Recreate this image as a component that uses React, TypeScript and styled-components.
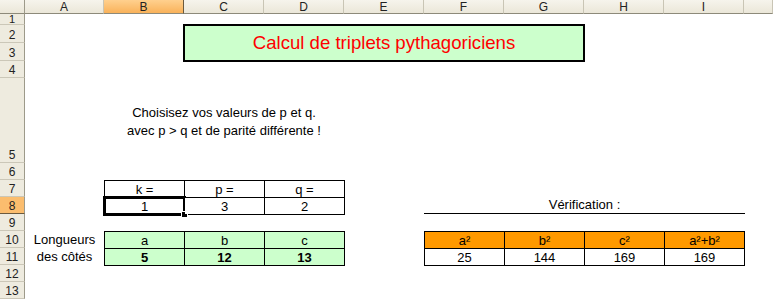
import styled, { createGlobalStyle } from "styled-components";

const GlobalStyle = createGlobalStyle`
  html, body {
    margin: 0;
    padding: 0;
    background: #ffffff;
  }
  body {
    font-family: "Liberation Sans", Arial, sans-serif;
    font-size: 13px;
    color: #000000;
  }
`;

const Sheet = styled.div`
  display: grid;
  grid-template-columns: 25px 79px repeat(8, 80px) 1fr;
  grid-template-rows: 14px 11px 18px 18px 17px 85px repeat(8, 17px);
  width: 773px;
  height: 299px;
  overflow: hidden;
  background: #ffffff;
`;

const Corner = styled.div`
  grid-column: 1;
  grid-row: 1;
  background: linear-gradient(#f6f4ec, #ebe7d9);
  border-right: 1px solid #9d9a8a;
  border-bottom: 1px solid #8d8a7a;
  box-sizing: border-box;
`;

const ColHeader = styled.div<{ $col: number; $active?: boolean }>`
  grid-column: ${(p) => p.$col};
  grid-row: 1;
  display: flex;
  align-items: center;
  justify-content: center;
  box-sizing: border-box;
  font-size: 12px;
  line-height: 1;
  color: #222;
  background: ${(p) =>
    p.$active ? "linear-gradient(#ffd08e, #f9b25a)" : "linear-gradient(#f6f4ec, #ebe7d9)"};
  border-right: 1px solid ${(p) => (p.$active ? "#6b5a3e" : "#c9c5b5")};
  border-bottom: 1px solid #8d8a7a;
`;

const RowHeader = styled.div<{ $row: number; $active?: boolean; $short?: boolean }>`
  grid-column: 1;
  grid-row: ${(p) => p.$row};
  display: flex;
  align-items: ${(p) => (p.$short ? "center" : "flex-end")};
  justify-content: center;
  box-sizing: border-box;
  font-size: ${(p) => (p.$short ? "11px" : "12px")};
  line-height: 10px;
  padding-bottom: ${(p) => (p.$short ? "0" : "2px")};
  color: #222;
  background: ${(p) => (p.$active ? "#fbbd6e" : "#eeebdf")};
  border-right: 1px solid #9d9a8a;
  border-bottom: 1px solid ${(p) => (p.$active ? "#6b5a3e" : "#cbc7b8")};
`;

const TitleBox = styled.div`
  grid-column: 4 / 9;
  grid-row: 3 / 5;
  margin: -1px;
  border: 2px solid #000;
  background: #ccffcc;
  display: flex;
  align-items: center;
  justify-content: center;
  font-size: 18.6px;
  color: #ff0000;
`;

const Instruction = styled.div`
  grid-column: 3 / 6;
  grid-row: 6;
  display: flex;
  align-items: center;
  justify-content: center;
  text-align: center;
  line-height: 18px;
  padding-top: 3px;
`;

const SideLabel = styled.div<{ $row: number }>`
  grid-column: 2;
  grid-row: ${(p) => p.$row};
  display: flex;
  align-items: center;
  justify-content: center;
`;

const Table = styled.div<{ $area: string; $cols: number }>`
  grid-area: ${(p) => p.$area};
  display: grid;
  grid-template-columns: repeat(${(p) => p.$cols}, 1fr);
  grid-template-rows: 1fr 1fr;
  gap: 1px;
  padding: 1px;
  background: #000;
  width: calc(100% + 1px);
  height: calc(100% + 1px);
  box-sizing: border-box;
`;

const Cell = styled.div<{ $bg?: string; $bold?: boolean }>`
  position: relative;
  display: flex;
  align-items: center;
  justify-content: center;
  background: ${(p) => p.$bg ?? "#ffffff"};
  font-weight: ${(p) => (p.$bold ? "bold" : "normal")};
  line-height: 1;
  padding-top: 1px;
`;

const ActiveFrame = styled.div`
  position: absolute;
  top: -2px;
  left: -2px;
  right: -2px;
  bottom: -2px;
  border: 3px double #000;
  pointer-events: none;
`;

const FillHandle = styled.div`
  position: absolute;
  right: -5px;
  bottom: -5px;
  width: 5px;
  height: 5px;
  background: #000;
  border: 1px solid #fff;
`;

const Verification = styled.div`
  grid-column: 7 / 11;
  grid-row: 9;
  display: flex;
  align-items: flex-end;
  justify-content: center;
  border-bottom: 1px solid #000;
  margin-right: -1px;
  padding-bottom: 1px;
`;

const columns = ["A", "B", "C", "D", "E", "F", "G", "H", "I", ""];
const rows = [1, 2, 3, 4, 5, 6, 7, 8, 9, 10, 11, 12, 13];

const kRow = [
  ["k =", "p =", "q ="],
  ["1", "3", "2"],
];
const sides = [
  ["a", "b", "c"],
  ["5", "12", "13"],
];
const checkRow = [
  ["a²", "b²", "c²", "a²+b²"],
  ["25", "144", "169", "169"],
];

export default function App() {
  return (
    <>
      <GlobalStyle />
      <Sheet>
        <Corner />
        {columns.map((c, i) => (
          <ColHeader key={i} $col={i + 2} $active={c === "B"}>
            {c}
          </ColHeader>
        ))}
        {rows.map((r) => (
          <RowHeader key={r} $row={r + 1} $active={r === 8} $short={r === 1}>
            {r}
          </RowHeader>
        ))}

        <TitleBox>Calcul de triplets pythagoriciens</TitleBox>

        <Instruction>
          Choisisez vos valeurs de p et q.
          <br />
          avec p &gt; q et de parité différente !
        </Instruction>

        <Table $area="8 / 3 / 10 / 6" $cols={3}>
          {kRow.map((row, ri) =>
            row.map((v, ci) => (
              <Cell key={`${ri}-${ci}`}>
                {v}
                {ri === 1 && ci === 0 && (
                  <ActiveFrame>
                    <FillHandle />
                  </ActiveFrame>
                )}
              </Cell>
            ))
          )}
        </Table>

        <Verification>Vérification :</Verification>

        <SideLabel $row={11}>Longueurs</SideLabel>
        <SideLabel $row={12}>des côtés</SideLabel>

        <Table $area="11 / 3 / 13 / 6" $cols={3}>
          {sides.map((row, ri) =>
            row.map((v, ci) => (
              <Cell key={`${ri}-${ci}`} $bg="#ccffcc" $bold={ri === 1}>
                {v}
              </Cell>
            ))
          )}
        </Table>

        <Table $area="11 / 7 / 13 / 11" $cols={4}>
          {checkRow.map((row, ri) =>
            row.map((v, ci) => (
              <Cell key={`${ri}-${ci}`} $bg={ri === 0 ? "#ff9900" : "#ffffff"}>
                {v}
              </Cell>
            ))
          )}
        </Table>
      </Sheet>
    </>
  );
}
